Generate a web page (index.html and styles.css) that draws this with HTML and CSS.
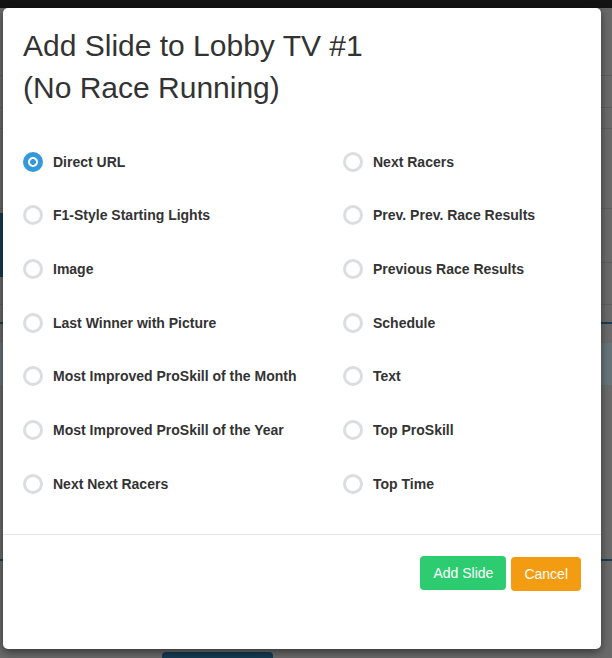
FILE: index.html
```html
<!DOCTYPE html>
<html>
<head>
<meta charset="utf-8">
<link rel="stylesheet" href="styles.css">
</head>
<body>
<div class="app">
  <div class="navbar"></div>
  <div class="content">
    <div class="side-strip"></div>
    <div class="bottom-btn"></div>
  </div>
</div>
<div class="modal">
  <div class="modal-header">
    <h1 class="modal-title">Add Slide to Lobby TV #1<br>(No Race Running)</h1>
  </div>
  <div class="modal-body">
    <div class="options">
      <label class="option"><span class="radio checked"></span><span class="label">Direct URL</span></label>
      <label class="option"><span class="radio"></span><span class="label">Next Racers</span></label>
      <label class="option"><span class="radio"></span><span class="label">F1-Style Starting Lights</span></label>
      <label class="option"><span class="radio"></span><span class="label">Prev. Prev. Race Results</span></label>
      <label class="option"><span class="radio"></span><span class="label">Image</span></label>
      <label class="option"><span class="radio"></span><span class="label">Previous Race Results</span></label>
      <label class="option"><span class="radio"></span><span class="label">Last Winner with Picture</span></label>
      <label class="option"><span class="radio"></span><span class="label">Schedule</span></label>
      <label class="option"><span class="radio"></span><span class="label">Most Improved ProSkill of the Month</span></label>
      <label class="option"><span class="radio"></span><span class="label">Text</span></label>
      <label class="option"><span class="radio"></span><span class="label">Most Improved ProSkill of the Year</span></label>
      <label class="option"><span class="radio"></span><span class="label">Top ProSkill</span></label>
      <label class="option"><span class="radio"></span><span class="label">Next Next Racers</span></label>
      <label class="option"><span class="radio"></span><span class="label">Top Time</span></label>
    </div>
  </div>
  <div class="modal-footer">
    <button class="btn btn-success">Add Slide</button>
    <button class="btn btn-warning">Cancel</button>
  </div>
</div>
</body>
</html>
```
FILE: styles.css
```css
* { box-sizing: border-box; }
html, body { margin: 0; padding: 0; }
body {
  width: 612px;
  height: 658px;
  overflow: hidden;
  font-family: "Liberation Sans", Arial, sans-serif;
  background: #6a6a6a;
  position: relative;
}
.app { display: flex; flex-direction: column; height: 658px; }
.navbar { height: 8px; background: #141414; flex: none; }
.content {
  flex: 1;
  display: flex;
  flex-direction: column;
  background:
    linear-gradient(#5e5e5e, #5e5e5e) 0 67px / 100% 1px no-repeat,
    linear-gradient(#5e5e5e, #5e5e5e) 0 99px / 100% 1px no-repeat,
    linear-gradient(#5e5e5e, #5e5e5e) 0 120px / 100% 1px no-repeat,
    linear-gradient(#5e5e5e, #5e5e5e) 0 200px / 100% 1px no-repeat,
    linear-gradient(#5e5e5e, #5e5e5e) 0 254px / 100% 1px no-repeat,
    linear-gradient(#5e5e5e, #5e5e5e) 0 296px / 100% 1px no-repeat,
    linear-gradient(#1d3c55, #1d3c55) 0 314px / 100% 2px no-repeat,
    linear-gradient(#667479, #667479) 0 335px / 100% 42px no-repeat,
    linear-gradient(#1d3c55, #1d3c55) 0 551px / 100% 2px no-repeat,
    #6a6a6a;
}
.side-strip {
  margin-top: 205px;
  width: 8px;
  height: 64px;
  background: #163a52;
}
.bottom-btn {
  margin-top: auto;
  margin-left: 162px;
  width: 111px;
  height: 6px;
  border-radius: 4px 4px 0 0;
  background: #163a52;
}
.modal {
  position: absolute;
  left: 3px;
  top: 8px;
  width: 598px;
  height: 641px;
  background: #fff;
  border-radius: 5px;
  box-shadow: 0 3px 9px rgba(0,0,0,.5);
  display: flex;
  flex-direction: column;
}
.modal-header { padding: 17px 20px 0 20px; }
.modal-title {
  margin: 0;
  font-size: 30px;
  font-weight: normal;
  line-height: 42px;
  color: #333;
}
.modal-body { padding: 26px 20px 23px 20px; }
.options {
  display: grid;
  grid-template-columns: 320px 1fr;
  grid-auto-rows: 53.67px;
}
.option {
  display: flex;
  align-items: center;
  gap: 10px;
}
.radio {
  width: 20px;
  height: 20px;
  border-radius: 50%;
  border: 3px solid #dadee0;
  background: #fff;
  flex: none;
}
.radio.checked {
  border: 5px solid #3498db;
  background: radial-gradient(circle, #3498db 0 2.6px, #fff 3.2px);
}
.label {
  font-size: 14px;
  font-weight: bold;
  color: #333;
}
.modal-footer {
  border-top: 1px solid #e5e5e5;
  margin-top: auto;
  padding: 21px 20px 58px 20px;
  display: flex;
  justify-content: flex-end;
  align-items: flex-start;
  gap: 5px;
}
.btn {
  font-family: "Liberation Sans", Arial, sans-serif;
  font-size: 14px;
  line-height: 20px;
  padding: 7px 13px;
  border: 0;
  border-radius: 4px;
  color: #fff;
}
.btn-success { background: #2ecc71; }
.btn-warning { background: #f39c12; margin-top: 1px; }
```
